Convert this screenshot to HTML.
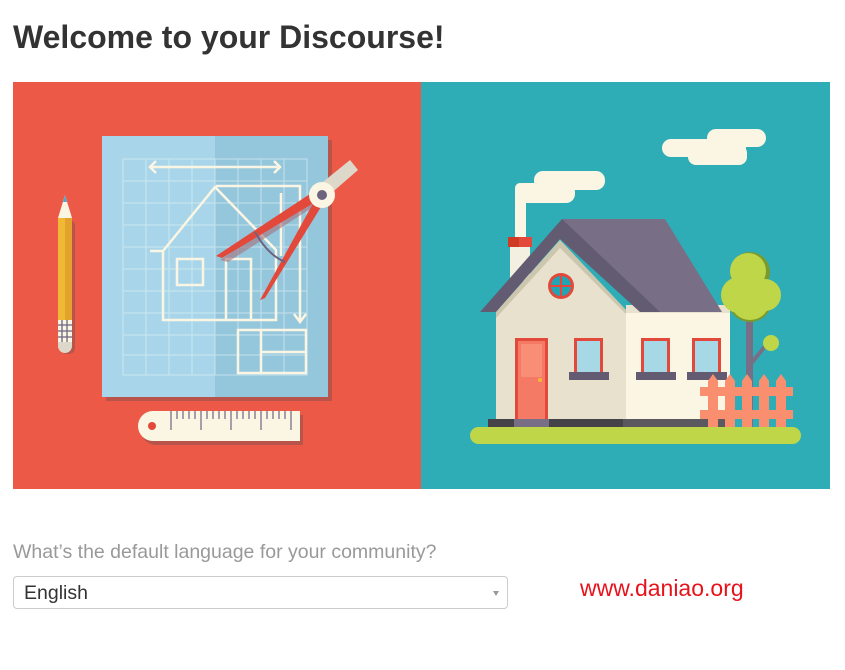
<!DOCTYPE html>
<html><head><meta charset="utf-8"><style>
html,body{margin:0;padding:0;background:#fff;width:845px;height:670px;overflow:hidden;font-family:"Liberation Sans",Arial,sans-serif}
h1{position:absolute;left:13px;top:19px;margin:0;font-size:32px;font-weight:bold;color:#333;letter-spacing:0}
svg{position:absolute;left:0;top:0}
.lbl{position:absolute;left:13px;top:541px;font-size:19.5px;color:#999}
.sel{position:absolute;left:13px;top:576px;width:495px;height:33px;border:1px solid #ccc;border-radius:4px;box-sizing:border-box}
.sel span{position:absolute;left:10px;top:5px;font-size:19.5px;color:#333}
.sel i{position:absolute;right:8px;top:14px;width:0;height:0;border-left:3px solid transparent;border-right:3px solid transparent;border-top:5px solid #999}
.wm{position:absolute;left:580px;top:575px;font-size:23px;color:#e8131a}
</style></head><body>
<h1>Welcome to your Discourse!</h1>
<svg width="845" height="670" viewBox="0 0 845 670">
<rect x="13" y="82" width="408" height="407" fill="#ec5a47"/>
<rect x="421" y="82" width="409" height="407" fill="#2fadb6"/>
<!-- paper -->
<rect x="106" y="140" width="226" height="261" fill="#b9544a"/>
<rect x="102" y="136" width="113" height="261" fill="#a8d5e9"/>
<rect x="215" y="136" width="113" height="261" fill="#94c6dc"/>
<g stroke="#d8ecf2" stroke-width="1" opacity="0.7" fill="none">
<path d="M123 159H307V375H123Z M146 159V375 M169 159V375 M192 159V375 M215 159V375 M238 159V375 M261 159V375 M284 159V375 M123 181H307 M123 203H307 M123 225H307 M123 247H307 M123 269H307 M123 291H307 M123 313H307 M123 335H307 M123 355H307"/>
</g>
<g stroke="#fbf6e4" stroke-width="2.5" fill="none">
<path d="M150 167H280 M156 161L150 167L156 173 M274 161L280 167L274 173"/>
<path d="M163 251L215 187L276 250V320H163V251Z M150 251H163"/>
<rect x="177" y="259" width="26" height="26"/>
<path d="M226 320V259H251V320"/>
<path d="M216 186H300V322 M294 314L300 322L306 314 M281 193V256"/>
<rect x="238" y="330" width="68" height="43"/><path d="M261 330V373 M261 352H306"/>
</g>
<!-- compass -->
<path d="M220 260L318 195L324 200L228 262Z" fill="#a5717b" opacity="0.6"/>
<path d="M216 256L316 190L322 198L222 258Z" fill="#e2493b"/>
<path d="M260 300L316 198L324 202L265 298Z" fill="#e2493b"/>
<path d="M318 186L350 160L358 170L328 196Z" fill="#ddd8c9"/>
<circle cx="322" cy="195" r="13" fill="#fbf6e4"/>
<circle cx="322" cy="195" r="5" fill="#6d6480"/>
<path d="M255 232Q268 255 285 262" stroke="#6d6480" stroke-width="2" fill="none"/>
<!-- pencil -->
<rect x="61" y="220" width="14" height="134" rx="6" fill="#b9544a"/>
<path d="M58 218L65 195L72 218Z" fill="#fbf6e4"/>
<path d="M63 202L65 195L67 202Z" fill="#4da9d0"/>
<rect x="58" y="218" width="14" height="102" fill="#f0b935"/>
<rect x="65" y="218" width="7" height="102" fill="#e3a22c"/>
<rect x="58" y="320" width="14" height="22" fill="#fbf6e4"/>
<path d="M58 325H72 M58 331H72 M58 337H72 M62 320V342 M67 320V342" stroke="#6d6480" stroke-width="1.3"/>
<path d="M58 342H72V346A7 7 0 0 1 58 346Z" fill="#ddd8c9"/>
<!-- ruler -->
<path d="M156 415H303V445H156A15 15 0 0 1 156 415Z" fill="#b9544a"/>
<path d="M153 411H300V441H153A15 15 0 0 1 153 411Z" fill="#fbf6e4"/>
<circle cx="152" cy="426" r="4" fill="#e2493b"/>
<g stroke="#6d6480" stroke-width="1.2"><path d="M171 411V430 M177 411V419 M183 411V419 M189 411V419 M195 411V419 M201 411V430 M207 411V419 M213 411V419 M219 411V419 M225 411V419 M231 411V430 M237 411V419 M243 411V419 M249 411V419 M255 411V419 M261 411V430 M267 411V419 M273 411V419 M279 411V419 M285 411V419 M291 411V430"/></g>
<!-- clouds -->
<rect x="662" y="139" width="84" height="18" rx="9" fill="#fbf6e4"/>
<rect x="688" y="145" width="59" height="20" rx="8" fill="#fbf6e4"/>
<rect x="707" y="129" width="59" height="18" rx="9" fill="#fbf6e4"/>
<rect x="534" y="171" width="71" height="19" rx="9" fill="#fbf6e4"/>
<rect x="515" y="183" width="60" height="20" rx="9" fill="#fbf6e4"/>
<rect x="515" y="183" width="11" height="60" rx="5" fill="#fbf6e4"/>
<!-- chimney -->
<rect x="510" y="246" width="20" height="35" fill="#f3efe1"/>
<rect x="508" y="237" width="24" height="10" fill="#e2493b"/>
<rect x="508" y="237" width="11" height="10" fill="#cf3a22"/>
<!-- walls -->
<rect x="626" y="305" width="104" height="115" fill="#fbf6e4"/>
<rect x="626" y="305" width="104" height="8" fill="#e7e1cd"/>
<path d="M496 312L560 240L626 310V420H496Z" fill="#e7e1cd"/>
<path d="M496 312L560 240L626 310L626 314L560 248L496 318Z" fill="#ccc6ae"/>
<!-- roof -->
<path d="M562 219H665L722 312H640Z" fill="#786f87"/>
<path d="M562 219L480 312H496L560 239L640 312H660Z" fill="#625b72"/>
<!-- round window -->
<circle cx="561" cy="286" r="13" fill="#e2493b"/>
<circle cx="561" cy="286" r="10" fill="#22a4b5"/>
<path d="M561 276V296 M551 286H571" stroke="#e2493b" stroke-width="2"/>
<!-- door -->
<rect x="515" y="338" width="33" height="82" fill="#e2493b"/>
<rect x="518" y="341" width="27" height="79" fill="#f47a65"/>
<rect x="521" y="344" width="21" height="33" fill="#f78e75"/>
<circle cx="540" cy="380" r="2" fill="#f0b935"/>
<!-- windows -->
<g><rect x="574" y="338" width="29" height="34" fill="#e2493b"/><rect x="577" y="341" width="23" height="31" fill="#a6d8e6"/><rect x="569" y="372" width="40" height="8" fill="#625b72"/></g>
<g><rect x="641" y="338" width="29" height="34" fill="#e2493b"/><rect x="644" y="341" width="23" height="31" fill="#a6d8e6"/><rect x="636" y="372" width="40" height="8" fill="#625b72"/></g>
<g><rect x="692" y="338" width="29" height="34" fill="#e2493b"/><rect x="695" y="341" width="23" height="31" fill="#a6d8e6"/><rect x="687" y="372" width="40" height="8" fill="#625b72"/></g>
<!-- base -->
<rect x="488" y="419" width="240" height="8" fill="#454347"/>
<rect x="514" y="419" width="35" height="8" fill="#786f87"/>
<rect x="623" y="419" width="105" height="8" fill="#5c585f"/>
<!-- tree -->
<rect x="746" y="310" width="7" height="117" fill="#786f87"/>
<path d="M750 365L766 345" stroke="#786f87" stroke-width="4"/>
<circle cx="750" cy="300" r="22" fill="#7a9a2e"/>
<circle cx="750" cy="272" r="20" fill="#7a9a2e"/>
<circle cx="750" cy="300" r="20" fill="#bfd649"/>
<circle cx="748" cy="271" r="18" fill="#bfd649"/>
<circle cx="739" cy="295" r="18" fill="#bfd649"/>
<circle cx="765" cy="295" r="16" fill="#bfd649"/>
<circle cx="771" cy="343" r="8" fill="#bfd649"/>
<!-- fence -->
<g fill="#f98f6f">
<path d="M708 381L713 374L718 381V427H708Z M725 381L730 374L735 381V427H725Z M742 381L747 374L752 381V427H742Z M759 381L764 374L769 381V427H759Z M776 381L781 374L786 381V427H776Z"/>
<rect x="700" y="387" width="93" height="9"/><rect x="700" y="410" width="93" height="9"/>
</g>
<!-- grass -->
<rect x="470" y="427" width="331" height="17" rx="8.5" fill="#bfd649"/>
</svg>
<div class="lbl">What’s the default language for your community?</div>
<div class="sel"><span>English</span><i></i></div>
<div class="wm">www.daniao.org</div>
</body></html>
